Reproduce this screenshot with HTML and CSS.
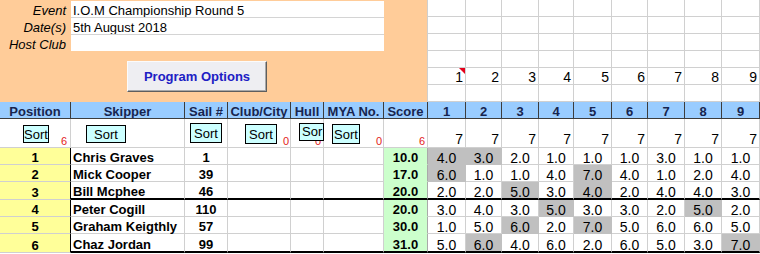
FILE: index.html
```html
<!DOCTYPE html>
<html>
<head>
<meta charset="utf-8">
<link rel="stylesheet" href="styles.css">
</head>
<body>
<div class="sheet">
  <div class="info">
    <div class="info-grid">
      <div class="lbl">Event</div><div class="val val-first">I.O.M Championship Round 5</div>
      <div class="lbl">Date(s)</div><div class="val">5th August 2018</div>
      <div class="lbl">Host Club</div><div class="val"></div>
    </div>
    <button class="prog" type="button">Program Options</button>
  </div>

  <div class="g"></div><div class="g"></div><div class="g"></div><div class="g"></div><div class="g"></div><div class="g"></div><div class="g"></div><div class="g"></div><div class="g"></div>
  <div class="g"></div><div class="g"></div><div class="g"></div><div class="g"></div><div class="g"></div><div class="g"></div><div class="g"></div><div class="g"></div><div class="g"></div>
  <div class="g"></div><div class="g"></div><div class="g"></div><div class="g"></div><div class="g"></div><div class="g"></div><div class="g"></div><div class="g"></div><div class="g"></div>
  <div class="g"></div><div class="g"></div><div class="g"></div><div class="g"></div><div class="g"></div><div class="g"></div><div class="g"></div><div class="g"></div><div class="g"></div>
  <div class="g n cm">1</div><div class="g n">2</div><div class="g n">3</div><div class="g n">4</div><div class="g n">5</div><div class="g n">6</div><div class="g n">7</div><div class="g n">8</div><div class="g n">9</div>
  <div class="g"></div><div class="g"></div><div class="g"></div><div class="g"></div><div class="g"></div><div class="g"></div><div class="g"></div><div class="g"></div><div class="g"></div>

  <div class="h">Position</div><div class="h">Skipper</div><div class="h">Sail #</div><div class="h">Club/City</div><div class="h">Hull</div><div class="h">MYA No.</div><div class="h">Score</div>
  <div class="h">1</div><div class="h">2</div><div class="h">3</div><div class="h">4</div><div class="h">5</div><div class="h">6</div><div class="h">7</div><div class="h">8</div><div class="h">9</div>

  <div class="s s-pos"><span class="sbtn">Sort</span><span class="cnt">6</span></div>
  <div class="s s-skip"><span class="sbtn">Sort</span></div>
  <div class="s s-sail"><span class="sbtn">Sort</span></div>
  <div class="s s-club"><span class="sbtn">Sort</span><span class="cnt">0</span></div>
  <div class="s s-hull"><span class="sbtn">Sor</span><span class="cnt">0</span></div>
  <div class="s s-mya"><span class="sbtn">Sort</span><span class="cnt">0</span></div>
  <div class="s s-score"><span class="cnt">6</span></div>
  <div class="s r7">7</div><div class="s r7">7</div><div class="s r7">7</div><div class="s r7">7</div><div class="s r7">7</div><div class="s r7">7</div><div class="s r7">7</div><div class="s r7">7</div><div class="s r7">7</div>

  <div class="d pos">1</div><div class="d nm">Chris Graves</div><div class="d sl">1</div><div class="d"></div><div class="d"></div><div class="d"></div><div class="d sc">10.0</div>
  <div class="d r hl">4.0</div><div class="d r hl">3.0</div><div class="d r">2.0</div><div class="d r">1.0</div><div class="d r">1.0</div><div class="d r">1.0</div><div class="d r">3.0</div><div class="d r">1.0</div><div class="d r">1.0</div>

  <div class="d pos">2</div><div class="d nm">Mick Cooper</div><div class="d sl">39</div><div class="d"></div><div class="d"></div><div class="d"></div><div class="d sc">17.0</div>
  <div class="d r hl">6.0</div><div class="d r">1.0</div><div class="d r">1.0</div><div class="d r">4.0</div><div class="d r hl">7.0</div><div class="d r">4.0</div><div class="d r">1.0</div><div class="d r">2.0</div><div class="d r">4.0</div>

  <div class="d pos">3</div><div class="d nm tk">Bill Mcphee</div><div class="d sl tk">46</div><div class="d tk"></div><div class="d tk"></div><div class="d tk"></div><div class="d sc tk">20.0</div>
  <div class="d r tk">2.0</div><div class="d r tk">2.0</div><div class="d r hl tk">5.0</div><div class="d r tk">3.0</div><div class="d r hl tk">4.0</div><div class="d r tk">2.0</div><div class="d r tk">4.0</div><div class="d r tk">4.0</div><div class="d r tk">3.0</div>

  <div class="d pos">4</div><div class="d nm">Peter Cogill</div><div class="d sl">110</div><div class="d"></div><div class="d"></div><div class="d"></div><div class="d sc">20.0</div>
  <div class="d r">3.0</div><div class="d r">4.0</div><div class="d r">3.0</div><div class="d r hl">5.0</div><div class="d r">3.0</div><div class="d r">3.0</div><div class="d r">2.0</div><div class="d r hl">5.0</div><div class="d r">2.0</div>

  <div class="d pos">5</div><div class="d nm">Graham Keigthly</div><div class="d sl">57</div><div class="d"></div><div class="d"></div><div class="d"></div><div class="d sc">30.0</div>
  <div class="d r">1.0</div><div class="d r">5.0</div><div class="d r hl">6.0</div><div class="d r">2.0</div><div class="d r hl">7.0</div><div class="d r">5.0</div><div class="d r">6.0</div><div class="d r">6.0</div><div class="d r">5.0</div>

  <div class="d pos">6</div><div class="d nm tk">Chaz Jordan</div><div class="d sl tk">99</div><div class="d tk"></div><div class="d tk"></div><div class="d tk"></div><div class="d sc tk">31.0</div>
  <div class="d r tk">5.0</div><div class="d r hl tk">6.0</div><div class="d r tk">4.0</div><div class="d r tk">6.0</div><div class="d r tk">2.0</div><div class="d r tk">6.0</div><div class="d r tk">5.0</div><div class="d r tk">3.0</div><div class="d r hl tk">7.0</div>
</div>
</body>
</html>
```

FILE: styles.css
```css
* { box-sizing: border-box; }
html, body { margin: 0; padding: 0; }
body {
  width: 760px;
  height: 254px;
  overflow: hidden;
  background: #fff;
  font-family: "Liberation Sans", Arial, sans-serif;
  font-size: 13px;
  color: #000;
}

.sheet {
  display: grid;
  grid-template-columns: 71px 114px 43px 63px 33px 60px 44px 38px 36px 37px 35px 38px 36px 37px 37px 38px;
  grid-template-rows: repeat(7, 17px) 29px 17px 17px 18px 17px 17px 19px;
}

/* ---- event info panel ---- */
.info {
  grid-column: 1 / 8;
  grid-row: 1 / 7;
  background: #ffcc99;
  border-right: 1px solid #cfcfcf;
}
.info-grid {
  display: grid;
  grid-template-columns: 71px 313px;
  grid-template-rows: repeat(3, 17px);
}
.lbl {
  display: flex;
  justify-content: flex-end;
  align-items: flex-end;
  padding-right: 5px;
  font-style: italic;
  line-height: 13px;
  white-space: nowrap;
}
.val {
  display: flex;
  align-items: flex-end;
  padding-left: 2px;
  background: #fff;
  border-top: 1px solid #d4d4d4;
  line-height: 13px;
  white-space: nowrap;
}
.val-first { border-top-color: #ffcc99; }

.prog {
  display: block;
  margin: 10px 0 0 127px;
  width: 140px;
  height: 31px;
  padding: 0;
  background: #eeeef2;
  border: 1px solid;
  border-color: #fbfbfb #5e5e5e #5e5e5e #fbfbfb;
  box-shadow: inset -1px -1px 0 #a8a8a8;
  font-family: "Liberation Sans", Arial, sans-serif;
  font-size: 13px;
  font-weight: bold;
  color: #2020c4;
}

/* ---- plain grid cells ---- */
.g {
  border-right: 1px solid #d0d0d0;
  border-bottom: 1px solid #d0d0d0;
  background: #fff;
}
.n {
  display: flex;
  justify-content: flex-end;
  align-items: flex-end;
  padding-right: 2px;
  font-size: 14px;
  line-height: 14px;
}
.cm { position: relative; }
.cm::after {
  content: "";
  position: absolute;
  top: 0;
  right: 0;
  width: 0;
  height: 0;
  border-top: 6px solid #e4001b;
  border-left: 6px solid transparent;
}

/* ---- header row ---- */
.h {
  display: flex;
  justify-content: center;
  align-items: flex-end;
  background: #99ccff;
  border-right: 1px solid #3c3c3c;
  border-bottom: 1px solid #3c3c3c;
  font-weight: bold;
  line-height: 13px;
  color: #17254f;
  white-space: nowrap;
  overflow: hidden;
}

/* ---- sort row ---- */
.s {
  display: flex;
  justify-content: space-between;
  align-items: flex-end;
  border-right: 1px solid #d0d0d0;
  border-bottom: 1px solid #d0d0d0;
  background: #fff;
}
.sbtn {
  position: relative;
  z-index: 1;
  flex: none;
  align-self: flex-start;
  display: flex;
  justify-content: center;
  align-items: center;
  background: #ccffff;
  border: 1px solid #000;
  font-family: "Liberation Sans Narrow", "Liberation Sans", Arial, sans-serif;
  font-size: 13px;
  line-height: 1;
  white-space: nowrap;
  overflow: hidden;
}
.cnt {
  margin-left: auto;
  padding-bottom: 0;
  color: #e31b1b;
  font-size: 11px;
  line-height: 12px;
}
.s-pos .sbtn { margin: 6px 0 0 23px; width: 26px; height: 18px; }
.s-pos .cnt { padding-right: 3px; }
.s-skip .sbtn { margin: 6px 0 0 15px; width: 40px; height: 18px; }
.s-sail .sbtn { margin: 4px 0 0 5px; width: 32px; height: 20px; }
.s-club .sbtn { margin: 5px 0 0 17px; width: 32px; height: 20px; }
.s-club .cnt { padding-right: 1px; }
.s-hull .sbtn { margin: 4px -1px 0 8px; width: 25px; height: 18px; justify-content: flex-start; padding-left: 2px; align-items: flex-start; padding-top: 1px; }
.s-hull .cnt { margin-left: -9px; padding-right: 2px; }
.s-mya .sbtn { margin: 5px 0 0 8px; width: 28px; height: 20px; }
.s-mya .cnt { padding-right: 1px; }
.s-score .cnt { padding-right: 2px; }
.r7 {
  justify-content: flex-end;
  padding-right: 2px;
  padding-bottom: 1px;
  font-size: 14px;
  line-height: 14px;
}

/* ---- data rows ---- */
.d {
  display: flex;
  align-items: flex-end;
  border-right: 1px solid #d0d0d0;
  border-bottom: 1px solid #d0d0d0;
  background: #fff;
  line-height: 13px;
  white-space: nowrap;
}
.pos {
  justify-content: center;
  background: #ffff99;
  border-right-color: #000;
  font-weight: bold;
}
.nm { padding-left: 2px; font-weight: bold; }
.sl { justify-content: center; font-weight: bold; }
.sc {
  justify-content: center;
  background: #ccffcc;
  border-bottom-color: #ccffcc;
  border-right-color: #a9a9a9;
  font-weight: bold;
}
.r {
  justify-content: center;
  font-size: 14px;
  line-height: 12px;
}
.r.hl {
  background: #c0c0c0;
  border-color: #c0c0c0;
}
.d.tk { border-bottom: 2px solid #000; }
```
